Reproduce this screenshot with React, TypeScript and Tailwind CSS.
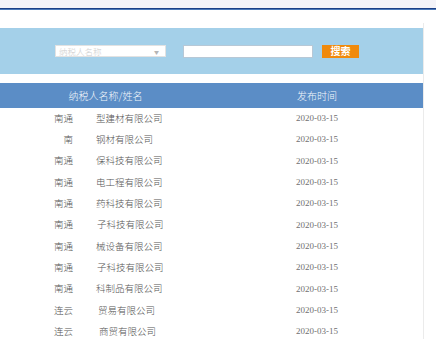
import React from "react";

const rows: [string, string, number][] = [
  ["南通", "型建材有限公司", 96],
  ["南", "钢材有限公司", 96],
  ["南通", "保科技有限公司", 96],
  ["南通", "电工程有限公司", 96],
  ["南通", "药科技有限公司", 96],
  ["南通", "子科技有限公司", 97],
  ["南通", "械设备有限公司", 96],
  ["南通", "子科技有限公司", 97],
  ["南通", "科制品有限公司", 96],
  ["连云", "贸易有限公司", 98],
  ["连云", "商贸有限公司", 99],
];

export default function App() {
  return (
    <div
      className="w-[436px] h-[339px] overflow-hidden bg-white relative"
      style={{ fontFamily: '"Noto Sans CJK SC", "Liberation Sans", sans-serif' }}
    >
      <div className="h-[8px] bg-[#f3f3f8]" />
      <div className="h-[1px] bg-[#1b3f86]" />
      <div className="h-[1px] bg-[#4a78b8]" />
      <div className="h-[13px]" />
      <div className="w-[424px] border-r border-[#ebebeb]">
        <div className="h-[5px]" />
        <div className="h-[46px] w-[423px] bg-[#a4d0e9] flex items-center">
          <div className="ml-[55px] w-[111px] h-[12px] bg-white border border-[#e2e2e2] flex items-center justify-between px-[3px] text-[8.5px] font-light text-[#cdcdcd] leading-none">
            <span>纳税人名称</span>
            <span className="text-[5px] text-[#b5b5b5] mr-[3px]">▼</span>
          </div>
          <div className="ml-[17px] w-[130px] h-[13px] bg-white border border-[#b7c8d6]" />
          <div className="ml-[9px] w-[37px] h-[13px] bg-[#f08a0c] flex items-center justify-center text-[10px] font-bold text-white leading-none">
            搜索
          </div>
        </div>
        <div className="h-[9px]" />
        <div className="h-[25px] w-[423px] bg-[#5b8dc6] grid grid-cols-[211px_212px] items-center text-[10px] font-light text-[#f4f8fc] leading-none">
          <div className="text-center">纳税人名称/姓名</div>
          <div className="text-center">发布时间</div>
        </div>
        <div className="w-[423px]">
          {rows.map(([a, b, x], i) => (
            <div
              key={i}
              className="h-[21.3px] grid grid-cols-[211px_212px] items-center text-[9.5px] font-light text-[#555] leading-none"
            >
              <div className="flex items-center">
                <span className="w-[73px] text-right">{a}</span>
                <span style={{ marginLeft: x - 73 }}>{b}</span>
              </div>
              <div
                className="text-center text-[9px] text-[#707070]"
                style={{ fontFamily: '"Liberation Serif", serif' }}
              >
                2020-03-15
              </div>
            </div>
          ))}
        </div>
      </div>
    </div>
  );
}
